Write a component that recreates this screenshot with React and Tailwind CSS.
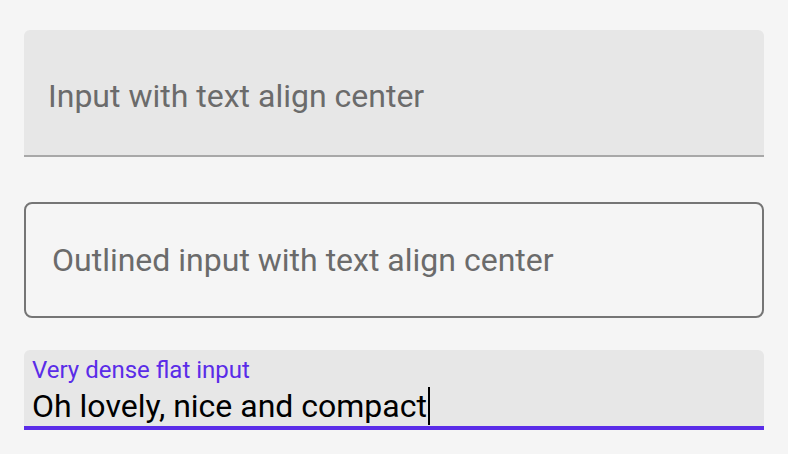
export default function App() {
  return (
    <div
      className="w-[788px] h-[454px] bg-[#f5f5f5] px-6 flex flex-col"
      style={{ fontFamily: "Roboto, 'Liberation Sans', sans-serif" }}
    >
      {/* flat input */}
      <div className="mt-[30px] h-[127px] rounded-t-[6px] bg-[#e7e7e7] border-b-2 border-[#a8a8a8] flex items-center pl-6 pt-[6px]">
        <span className="text-[32px] leading-none text-[#6b6b6b]">Input with text align center</span>
      </div>

      {/* outlined input */}
      <div className="mt-[45px] h-[116px] rounded-[8px] border-2 border-[#757575] flex items-center pl-[26px]">
        <span className="text-[32px] leading-none text-[#6b6b6b]">Outlined input with text align center</span>
      </div>

      {/* dense flat input */}
      <div className="mt-[32px] h-[80px] rounded-t-[6px] bg-[#e7e7e7] border-b-4 border-[#5a2ce8] px-2 flex flex-col">
        <span className="mt-[8px] text-[24px] leading-none text-[#5a2ce8]">Very dense flat input</span>
        <div className="mt-[5px] flex items-center">
          <span className="text-[32px] leading-none text-black">Oh lovely, nice and compact</span>
          <span className="w-[2px] h-[38px] bg-black ml-px" />
        </div>
      </div>
    </div>
  );
}
